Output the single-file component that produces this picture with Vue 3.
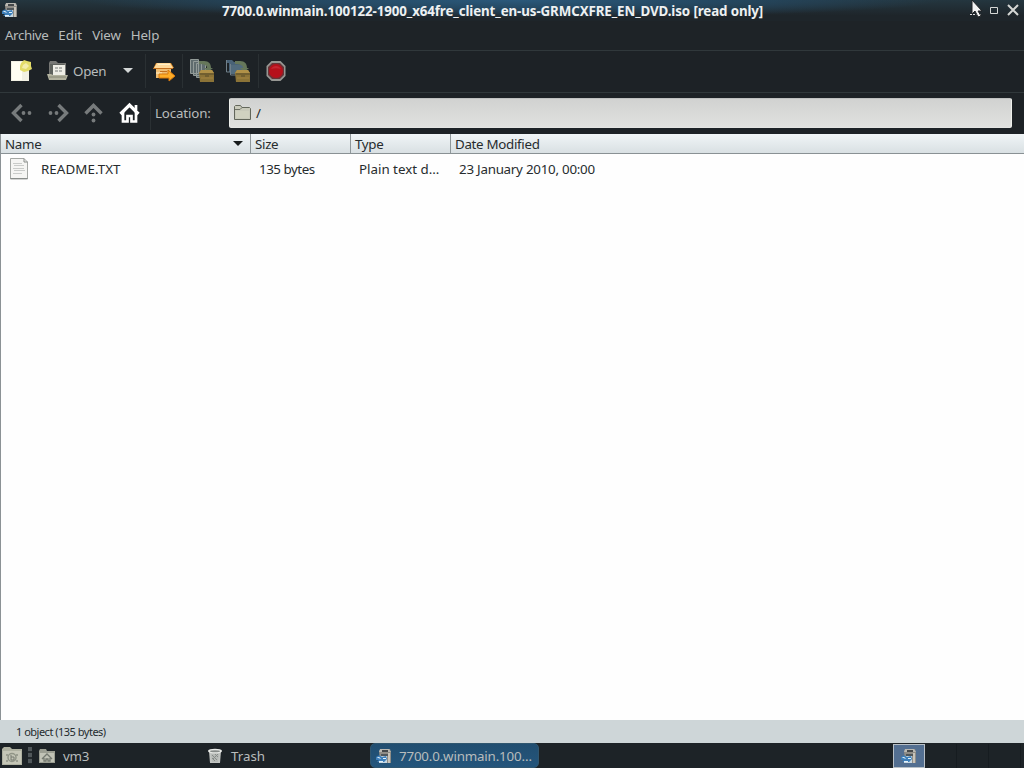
<script setup>
const title = '7700.0.winmain.100122-1900_x64fre_client_en-us-GRMCXFRE_EN_DVD.iso [read only]';
const menus = ['Archive', 'Edit', 'View', 'Help'];
const columns = ['Name', 'Size', 'Type', 'Date Modified'];
const files = [
  { name: 'README.TXT', size: '135 bytes', type: 'Plain text d…', date: '23 January 2010, 00:00' },
];
</script>

<template>
  <svg class="defs" width="0" height="0">
    <symbol id="archiver" viewBox="0 0 16 16">
      <path d="M3 3l2-2h9l1 3v11H4z" fill="#8f8d87" />
      <path d="M4 1h9l2 3H3z" fill="#b9b8b2" />
      <path d="M6 2h6v2H6z" fill="#44484a" />
      <path d="M5 6h7v2H5z" fill="#50575b" />
      <path d="M3 8h8v7H3z" fill="#c5d7e3" />
      <path d="M12 5h2v10h-2z" fill="#c9c4ba" />
      <path d="M0 9c2-2 4-2 6 0l4-1 1 3-3 3H1l2-2H0z" fill="#3d7fba" />
      <path d="M1 9.500c2-1 3 0 4 1.500M7 10h3v1H7zM3 13h4v1H3z" fill="#e4f2fa" />
    </symbol>
    <symbol id="extract" viewBox="0 0 24 24">
      <path d="M9 1h5c5 0 7 3 7 7h2l-5 4-4-4h3c0-3-3-4-8-4z" fill="#66775a" />
      <path d="M9 13l2-3h11l2 3v9H10z" fill="#8b7337" />
      <path d="M9 13l2-3h11l2 3z" fill="#b09148" />
      <path d="M10 14h14M15 16h4" stroke="#594c2b" fill="none" />
      <path d="M11 18h12" stroke="#a48542" />
    </symbol>
  </svg>

  <main class="screen">
    <header class="titlebar">
      <svg class="app-icon" width="16" height="16"><use href="#archiver" /></svg>
      <h1>{{ title }}</h1>
      <div class="window-buttons">
        <svg width="54" height="21" viewBox="0 0 54 21">
          <path d="M5 14.500h11" stroke="#ddd" stroke-dasharray="2 1" />
          <path d="M25.500 7.500h7v6h-7z" fill="none" stroke="#d5d7d5" />
          <path d="M43 5l10 10M53 5L43 15" stroke="#d4d6d4" stroke-width="2" />
          <path d="M7 0v14l3-3 3 6 3-1-3-5h4z" fill="#f3f3f3" stroke="#202326" />
        </svg>
      </div>
    </header>

    <nav class="menubar">
      <span v-for="menu of menus" :key="menu">{{ menu }}</span>
    </nav>

    <section class="toolbar">
      <button class="new">
        <svg width="24" height="24" viewBox="0 0 24 24">
          <path d="M2 2h14l4 5v15H2z" fill="#f1f0e3" />
          <path d="M3 3h10v18H3z" fill="#fffef2" />
          <path d="M12 4l3-3 3 1 4 1v4l1 3-4 2-4 1-4-2V7z" fill="#e3dc68" />
          <path d="M14 6l3-2 3 3-3 3-4-1z" fill="#f3edab" />
        </svg>
      </button>
      <button class="open">
        <svg width="24" height="24" viewBox="0 0 24 24">
          <path d="M3 4l1-2h6l2 2h8v14H3z" fill="#777875" />
          <path d="M4 5h14v12H4z" fill="#5e625d" />
          <path d="M7 6h12v11H7z" fill="#eeeee6" />
          <path d="M9 9h8M9 12h8" stroke="#777a78" stroke-dasharray="3 1" />
          <path d="M1 15h4l2 1h15l-2 5H3z" fill="#b3b39f" />
          <path d="M3 18h17" stroke="#858675" />
        </svg>
        <span>Open</span>
      </button>
      <button class="drop">
        <svg width="10" height="6" viewBox="0 0 10 6"><path d="M0 0h10L5 5z" fill="#d4d7d7" /></svg>
      </button>
      <i class="rule" />
      <button class="action">
        <svg width="24" height="24" viewBox="0 0 24 24">
          <path d="M4 4h15l3 5h-3v10H4V10H1z" fill="#df8f2c" />
          <path d="M5 4h13l3 5H2z" fill="#ffd99a" />
          <path d="M4 10h15v9H4z" fill="#efbd72" />
          <path d="M6 5.500h12M4 14h6" stroke="#fff0c8" />
          <path d="M2 9.500h19M8 12.500h7" stroke="#c46f1d" />
          <path d="M7 15h9v-4l7 6-6 5v-3H7z" fill="#ffad27" stroke="#d8780c" />
        </svg>
      </button>
      <i class="rule" />
      <button class="action files">
        <svg width="26" height="26" viewBox="0 0 26 26">
          <path d="M1.500 1.500h8v14h-8zM4.500 3.500h8v14h-8zM7.500 5.500h9v14h-9z" fill="#5f6c6e" stroke="#929b98" />
          <use href="#extract" width="24" height="24" x="1" y="2" />
        </svg>
      </button>
      <button class="action folder">
        <svg width="26" height="26" viewBox="0 0 26 26">
          <path d="M1 2h6l2 2h9v10H4V5H1z" fill="#496277" />
          <path d="M1.500 2v12H11M5.500 6v11H17" fill="none" stroke="#71808a" />
          <path d="M6 7h12v9H6z" fill="#526b7d" />
          <use href="#extract" width="24" height="24" x="1" y="2" />
        </svg>
      </button>
      <i class="rule after-extract" />
      <button class="stop">
        <svg width="22" height="22" viewBox="0 0 22 22">
          <path d="M6.500 1h9l5 5v10l-5 5h-9l-5-5V6z" fill="#969793" />
          <path d="M7 3h8l4 4v8l-4 4H7l-4-4V7z" fill="#683438" />
          <circle cx="11" cy="11" r="7" fill="#b6101b" />
          <path d="M6 9c2-4 8-4 10 0-3-1-7-1-10 0z" fill="#c52632" />
        </svg>
      </button>
    </section>

    <section class="location">
      <div class="nav-buttons">
        <svg width="24" height="24" viewBox="0 0 24 24">
          <path d="M11.500 4l-8 8 8 8" fill="none" stroke="#777b7c" stroke-width="3.400" />
          <circle cx="13.500" cy="12" r="1.900" fill="#777b7c" /><circle cx="19.500" cy="12" r="1.900" fill="#777b7c" />
        </svg>
        <svg width="24" height="24" viewBox="0 0 24 24">
          <path d="M12.500 4l8 8-8 8" fill="none" stroke="#777b7c" stroke-width="3.400" />
          <circle cx="10.500" cy="12" r="1.900" fill="#777b7c" /><circle cx="4.500" cy="12" r="1.900" fill="#777b7c" />
        </svg>
        <svg width="24" height="24" viewBox="0 0 24 24">
          <path d="M3.500 12.500l8-8 8 8" fill="none" stroke="#777b7c" stroke-width="3.400" />
          <circle cx="11.500" cy="13.500" r="1.900" fill="#777b7c" /><circle cx="11.500" cy="19.500" r="1.900" fill="#777b7c" />
        </svg>
        <svg width="24" height="24" viewBox="0 0 24 24">
          <path d="M2.500 13L11.500 4l9 9" fill="none" stroke="#fff" stroke-width="3.200" />
          <path d="M5 11v9.500h4.500V15h4v5.500H18V11M18 4v5" fill="none" stroke="#fff" stroke-width="2.700" />
        </svg>
      </div>
      <i class="rule" />
      <label>Location:</label>
      <div class="path">
        <svg width="17" height="17" viewBox="0 0 17 17">
          <path d="M.5 15.500v-13l1-1h5l1.500 2h7.500l1 1v11z" fill="#c9cabb" stroke="#62665a" />
          <path d="M1 5.500h5l2-2" fill="none" stroke="#6d7065" />
          <path d="M2 7h13v7H2z" fill="#d0d1c0" />
        </svg>
        <span>/</span>
      </div>
    </section>

    <section class="listing">
      <div class="row head">
        <div v-for="(column, i) of columns" :key="column">
          <span>{{ column }}</span>
          <svg v-if="i === 0" width="10" height="6" viewBox="0 0 10 6"><path d="M0 0h10L5 5z" fill="#171b1c" /></svg>
        </div>
      </div>
      <div v-for="file of files" :key="file.name" class="row file">
        <div class="name">
          <svg width="18" height="22" viewBox="0 0 18 22">
            <path d="M.5 .5H14l3.500 3.500v17H.5z" fill="#f5f5f3" stroke="#a5a8a5" />
            <path d="M14 .5V4h3.500M17.500 20.500H.5" fill="none" stroke="#898d8a" />
            <path d="M3 5.500h9M4 7.500h10M3 10.500h11M4 12.500h11M3 15.500h9" stroke="#c9cbc9" />
          </svg>
          <span>{{ file.name }}</span>
        </div>
        <div class="size">{{ file.size }}</div>
        <div class="type">{{ file.type }}</div>
        <div class="date">{{ file.date }}</div>
      </div>
    </section>

    <footer class="status">1 object (135 bytes)</footer>

    <footer class="taskbar">
      <svg class="files-icon" width="20" height="18" viewBox="0 0 20 18">
        <path d="M0 2l2-2h6l2 2h10v16H0z" fill="#afb1a1" />
        <path d="M1 4h18v13H1z" fill="#c5c6b7" />
        <path d="M4 7h2v2H4zM14 7h2v2h-2zM4 13h2v2H4zM14 13h2v2h-2z" fill="#9b9e91" />
        <circle cx="10" cy="10.500" r="4" fill="none" stroke="#909487" stroke-width="1.500" />
        <path d="M9 8v5h3v-3H9" fill="none" stroke="#777b70" />
      </svg>
      <i class="grip" />
      <div class="task home">
        <svg width="16" height="16" viewBox="0 0 16 16">
          <path d="M0 3l1-2h6l1 2h8v12H0z" fill="#9b9e92" />
          <path d="M1 5h14v9H1z" fill="#c1c3b6" />
          <path d="M3 11l5-5 5 5M5 10v3h2v-2h2v2h2v-3" fill="none" stroke="#747970" stroke-width="1.300" />
        </svg>
        <span>vm3</span>
      </div>
      <div class="task trash">
        <svg width="16" height="16" viewBox="0 0 16 16">
          <path d="M2 3h12l-1 12H3z" fill="#c2c5c2" />
          <path d="M4 6l1 8h6l1-8z" fill="#b5b9b6" />
          <path d="M5 7l5 5M8 6l3 3M5 10l3 3M11 6l-5 5" stroke="#868b88" />
          <ellipse cx="8" cy="3" rx="7" ry="2.300" fill="#e9ebe8" />
          <ellipse cx="8" cy="3.200" rx="5" ry="1" fill="#858a88" />
        </svg>
        <span>Trash</span>
      </div>
      <div class="task active">
        <svg width="16" height="16"><use href="#archiver" /></svg>
        <span>7700.0.winmain.100…</span>
      </div>
      <div class="pager">
        <div class="desktop"><svg width="16" height="16"><use href="#archiver" /></svg></div>
        <div class="desktop" /><div class="desktop" /><div class="desktop" />
      </div>
    </footer>
  </main>
</template>

<style>
body {
  overflow: hidden;
}
</style>

<style scoped>
.defs {
  position: absolute;
}

.screen {
  width: 1024px;
  height: 768px;
  display: grid;
  grid-template-rows: 21px 29px 42px 42px 1fr 23px 25px;
  font: 13.333px/18px 'Noto Sans', sans-serif;
  color: #b8bcbc;
  background: #1e2327;
  overflow: hidden;
}

svg {
  display: block;
  flex: none;
}

button {
  display: flex;
  align-items: center;
  padding: 0;
  border: 0;
  color: inherit;
  background: none;
  font: inherit;
}

.titlebar {
  display: flex;
  align-items: center;
  background:
    radial-gradient(ellipse 430px 18px at 50% 0, #2b597b 0%, #254963 45%, transparent 100%),
    linear-gradient(#24363f, #1e252a 75%);
}

.app-icon {
  margin: 0 0 2px 2px;
}

h1 {
  margin: 0 0 0 204px;
  width: 560px;
  font-size: 13.333px;
  line-height: 18px;
  font-weight: 700;
  color: #edf0f1;
  white-space: nowrap;
  letter-spacing: -0.105px;
}

.window-buttons {
  margin-left: auto;
  padding-right: 5px;
}

.menubar {
  display: flex;
  align-items: center;
  gap: 10px;
  padding: 0 0 2px 5px;
}

.menubar span:first-child {
  letter-spacing: -0.4px;
}

.menubar span:nth-child(3),
.menubar span:nth-child(4) {
  letter-spacing: -0.15px;
}

.toolbar,
.location {
  display: flex;
  align-items: center;
  box-sizing: border-box;
  padding-bottom: 2px;
  border-top: 1px solid #30383b;
  background: #1d2226;
}

.new {
  margin-left: 9px;
}

.open {
  margin-left: 13px;
  gap: 3px;
  width: 60px;
  letter-spacing: -0.25px;
}

.drop {
  margin-left: 17px;
  width: 22px;
}

.rule {
  width: 1px;
  height: 34px;
  background: #2a3033;
}

.action {
  width: 36px;
  justify-content: center;
}

.files {
  margin-left: 1px;
}

.after-extract {
  margin-left: 2px;
}

.stop {
  margin-left: 6px;
}

.nav-buttons {
  display: flex;
  gap: 12px;
  padding-left: 10px;
}

.location .rule {
  margin-left: 8px;
}

label {
  width: 74px;
  margin-left: 4px;
  letter-spacing: -0.15px;
}

.path {
  display: flex;
  align-items: center;
  width: 783px;
  height: 30px;
  box-sizing: border-box;
  padding-left: 4px;
  gap: 5px;
  border: 1px solid #edefeb;
  border-color: #bfc1c0 #edefeb #e4e5e3;
  border-radius: 2px;
  background: linear-gradient(#d1d2d1, #e0e1df);
  color: #25292a;
}

.listing {
  border-left: 1px solid #8b9295;
  background: #fefefe;
  color: #272c2e;
}

.row {
  display: grid;
  grid-template-columns: 250px 100px 100px 1fr;
}

.head {
  height: 19px;
  border-bottom: 1px solid #899194;
  background: linear-gradient(#f0f5f7, #d9e0e3);
}

.head > div {
  display: flex;
  align-items: center;
  justify-content: space-between;
  padding: 1px 7px 0 4px;
  border-right: 1px solid #8f979a;
  letter-spacing: -0.3px;
}

.head > div:last-child {
  border: 0;
}

.file {
  height: 30px;
  align-items: center;
}

.name {
  display: flex;
  align-items: center;
  gap: 13px;
  padding-left: 9px;
  letter-spacing: 0.08px;
}

.size,
.type,
.date {
  padding-left: 8px;
  white-space: nowrap;
}

.size {
  letter-spacing: -0.45px;
}

.date {
  letter-spacing: -0.24px;
}

.status {
  padding: 3px 16px;
  background: #ced6d8;
  color: #252b2e;
  font-size: 11px;
  letter-spacing: -0.5px;
}

.taskbar {
  display: flex;
  align-items: center;
  background: #1d2327;
}

.files-icon {
  margin-left: 2px;
}

.grip {
  width: 4px;
  height: 17px;
  margin-left: 6px;
  background: repeating-linear-gradient(#50575a 0 4px, #242a2d 4px 6px);
}

.task {
  display: flex;
  align-items: center;
  box-sizing: border-box;
  height: 25px;
  gap: 8px;
}

.home {
  width: 168px;
  margin-left: 7px;
}

.home span {
  letter-spacing: -0.3px;
}

.trash {
  width: 163px;
}

.active {
  width: 169px;
  padding-left: 5px;
  gap: 7px;
  border: 1px solid #30566f;
  border-radius: 5px;
  background: linear-gradient(#214e70, #24557c);
  white-space: nowrap;
  letter-spacing: -0.17px;
}

.pager {
  display: grid;
  grid-template-columns: repeat(4, 32px);
  margin-left: auto;
  padding-right: 3px;
}

.desktop {
  height: 24px;
  box-sizing: border-box;
  border-right: 1px solid #161c20;
}

.desktop:first-child {
  display: grid;
  place-items: center;
  border: 1px solid #b8c0c6;
  background: #536f91;
}
</style>
